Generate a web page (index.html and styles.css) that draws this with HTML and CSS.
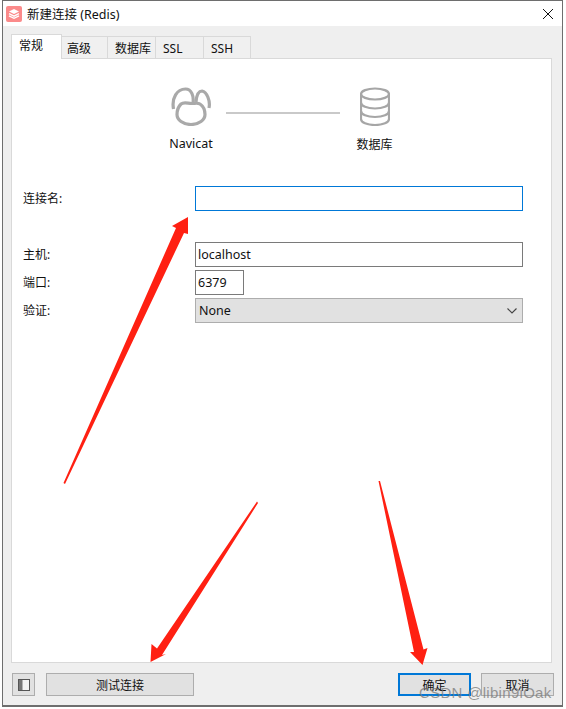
FILE: index.html
```html
<html>
<head>
    <title>新建连接 (Redis)</title>
    <link rel="stylesheet" href="styles.css">
</head>
<body>

<div class='window'>
    <div class='titlebar'>
        <svg class='app-icon' viewBox='0 0 16 16'>
            <rect width='16' height='16' rx='2' fill='#fb8a8a'/>
            <path d='M8 3 L13 5.5 L8 8 L3 5.5 Z' fill='#fff'/>
            <path d='M3 7.6 L8 10.1 L13 7.6 M3 9.8 L8 12.3 L13 9.8' fill='none' stroke='#fff' stroke-width='1.4'/>
        </svg>
        <span class='title'>新建连接 (Redis)</span>
        <svg class='close' viewBox='0 0 10 10'>
            <path d='M0 0 L10 10 M10 0 L0 10' fill='none' stroke='#111' stroke-width='1'/>
        </svg>
    </div>

    <div class='content'>
        <div class='tabs'>
            <div class='tab active'>常规</div>
            <div class='tab w46'>高级</div>
            <div class='tab w48'>数据库</div>
            <div class='tab w48'>SSL</div>
            <div class='tab w47'>SSH</div>
        </div>

        <div class='panel'>
            <div class='diagram'>
                <div class='node'>
                    <svg class='node-icon' viewBox='0 0 40 39'>
                        <g fill='none' stroke='#a9a9a9' stroke-width='3.2'>
                            <path d='M2.5 22 C0.5 11 6 2 14.5 2 C20.5 2 23 9 22 16'/>
                            <path d='M25 15 C25.5 9 27 4 31 4 C36 5 39.5 14 38 21'/>
                            <path d='M10 17 C7 20 6 24 6 27.5 C6 33 12 37.5 20 37.5 C28 37.5 34 33 34 27.5 C34 23 32 19 29 17 C27 15.5 24 16.5 20.5 16.5 C17 16.5 13 14.5 10 17 Z'/>
                        </g>
                    </svg>
                    <span class='node-name'>Navicat</span>
                </div>
                <div class='link'></div>
                <div class='node'>
                    <svg class='node-icon' viewBox='0 0 30 39'>
                        <g fill='none' stroke='#a6a6a6' stroke-width='2.2'>
                            <ellipse cx='15' cy='7' rx='14' ry='5.5'/>
                            <path d='M1 7 V32 C1 35.5 7 38 15 38 C23 38 29 35.5 29 32 V7'/>
                            <path d='M1 15.5 C1 19 7 21.5 15 21.5 C23 21.5 29 19 29 15.5'/>
                            <path d='M1 24 C1 27.5 7 30 15 30 C23 30 29 27.5 29 24'/>
                        </g>
                    </svg>
                    <span>数据库</span>
                </div>
            </div>

            <div class='form'>
                <div class='row name-row'>
                    <label>连接名:</label>
                    <input class='field focus' type='text' value=''>
                </div>
                <div class='row'>
                    <label>主机:</label>
                    <input class='field' type='text' value='localhost'>
                </div>
                <div class='row'>
                    <label>端口:</label>
                    <input class='field port' type='text' value='6379'>
                </div>
                <div class='row'>
                    <label>验证:</label>
                    <div class='select'>
                        <span>None</span>
                        <svg class='chevron' viewBox='0 0 10 6'>
                            <path d='M0.5 0.5 L5 5 L9.5 0.5' fill='none' stroke='#444' stroke-width='1.1'/>
                        </svg>
                    </div>
                </div>
            </div>
        </div>

        <div class='footer'>
            <div class='btn toggle'>
                <svg viewBox='0 0 12 12'>
                    <rect x='0.5' y='0.5' width='11' height='11' fill='#f4f4f4' stroke='#555'/>
                    <rect x='1' y='1' width='3.5' height='10' fill='#777'/>
                </svg>
            </div>
            <div class='btn test'>测试连接</div>
            <div class='spacer'></div>
            <div class='btn ok'>确定</div>
            <div class='btn cancel'>取消</div>
        </div>
    </div>
</div>

<!-- annotations pasted on top of the screenshot -->
<svg class='arrows' viewBox='0 0 566 709'>
    <polygon points='63.5,483 65,484 184,233 188,234 188,217 172,226 176,228'/>
    <polygon points='257,501.5 258,503 162,655 166,654 150.5,662 151.5,644 157,648.5'/>
    <polygon points='378.5,481 380,481 423.5,649.5 427.5,648 422.5,665 410,652 414,652'/>
</svg>
<div class='watermark'>CSDN @libin9iOak</div>

</body>
</html>
```

FILE: styles.css
```css
html, body {
    margin: 0;
    height: 709px;
    overflow: hidden;
    background: #fff;
}

body {
    position: relative;
    font-family: "Noto Sans", "Noto Sans CJK SC", sans-serif;
    font-size: 12px;
    color: #111;
}

.window {
    box-sizing: border-box;
    width: 561px;
    height: 707px;
    margin-left: 2px;
    border: 1px solid #6e6e6e;
    border-bottom-width: 2px;
    display: flex;
    flex-direction: column;
    background: #efefef;
}

.titlebar {
    height: 25px;
    flex: none;
    display: flex;
    align-items: center;
    padding: 0 9px 0 3px;
    background: #fff;
}

.app-icon {
    width: 16px;
    height: 16px;
    margin-right: 5px;
}

.title {
    font-size: 12.5px;
    flex: 1;
}

.close {
    width: 10px;
    height: 10px;
}

.content {
    flex: 1;
    display: flex;
    flex-direction: column;
    padding: 8px 8px 9px 9px;
    min-height: 0;
}

.tabs {
    display: flex;
    align-items: flex-end;
    height: 25px;
    margin-left: -1px;
    margin-bottom: -1px;
    position: relative;
}

.tab {
    box-sizing: border-box;
    height: 23px;
    line-height: 23px;
    padding-left: 5px;
    background: #f0f0f0;
    border: 1px solid #d9d9d9;
    border-left: 0;
}

.tab.active {
    width: 51px;
    height: 25px;
    line-height: 21px;
    padding-left: 7px;
    background: #fff;
    border-left: 1px solid #d9d9d9;
    border-bottom: 0;
}

.w46 { width: 46px; }
.w48 { width: 48px; padding-left: 7px; }
.w47 { width: 47px; padding-left: 7px; }

.panel {
    flex: 1;
    margin: 0 2px 0 -1px;
    padding: 28px 11px 0;
    background: #fff;
    border: 1px solid #d9d9d9;
}

.diagram {
    display: flex;
    justify-content: center;
    margin-left: 2px;
}

.node {
    width: 70px;
    display: flex;
    flex-direction: column;
    align-items: center;
    gap: 9px;
}

.node-icon {
    height: 39px;
}

.node-name {
    font-size: 12.5px;
    padding-left: 1px;
}

.link {
    width: 114px;
    height: 2px;
    margin-top: 25px;
    background: #c9c9c9;
}

.form {
    margin-top: 33px;
    display: flex;
    flex-direction: column;
    gap: 3px;
}

.row {
    display: flex;
    align-items: center;
}

.name-row {
    margin-bottom: 28px;
}

.row label {
    width: 172px;
    flex: none;
    padding-bottom: 1px;
}

.field {
    box-sizing: border-box;
    width: 328px;
    height: 25px;
    padding: 0 2px 1px;
    border: 1px solid #7a7a7a;
    outline: 0;
    background: #fff;
    font: 12.5px "Noto Sans", sans-serif;
    color: #111;
}

.field.focus {
    border-color: #0078d7;
}

.field.port {
    width: 49px;
}

.select {
    box-sizing: border-box;
    width: 328px;
    height: 25px;
    padding: 0 3px;
    display: flex;
    align-items: center;
    justify-content: space-between;
    background: #e1e1e1;
    border: 1px solid #adadad;
    font-size: 12.5px;
}

.chevron {
    width: 10px;
    height: 6px;
    margin-right: 2px;
}

.footer {
    display: flex;
    margin-top: 10px;
    height: 23px;
    flex: none;
}

.spacer {
    flex: 1;
}

.btn {
    box-sizing: border-box;
    height: 23px;
    display: flex;
    align-items: center;
    justify-content: center;
    background: #e1e1e1;
    border: 1px solid #adadad;
}

.toggle {
    width: 23px;
    margin-right: 11px;
}

.toggle svg {
    width: 12px;
    height: 12px;
}

.test {
    width: 148px;
}

.ok {
    width: 73px;
    margin-right: 10px;
    border: 2px solid #0078d7;
}

.cancel {
    width: 73px;
}

.arrows {
    position: absolute;
    left: 0;
    top: 0;
    width: 566px;
    height: 709px;
    fill: #ff2012;
}

.watermark {
    position: absolute;
    left: 419px;
    top: 684px;
    font: 15px "Liberation Sans", sans-serif;
    letter-spacing: 0.3px;
    color: rgba(120, 120, 120, 0.75);
    white-space: nowrap;
}
```
